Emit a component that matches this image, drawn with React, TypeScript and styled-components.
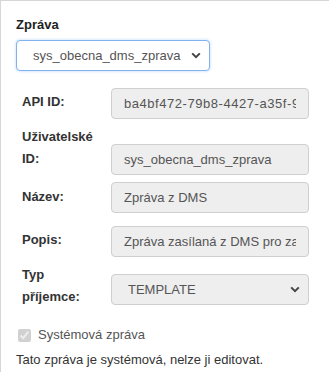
import React from 'react'
import styled, { createGlobalStyle } from 'styled-components'

const GlobalStyle = createGlobalStyle`
  html, body { margin: 0; padding: 0; background: #fff; }
`

const Panel = styled.div`
  box-sizing: border-box;
  width: 329px;
  height: 372px;
  border-top: 1px solid #d6d6d6;
  border-left: 1px solid #d6d6d6;
  padding: 15px 0 0 15px;
  font-family: 'Liberation Sans', Arial, sans-serif;
  font-size: 13px;
  color: #333;
`

const Title = styled.div`
  font-weight: bold;
  line-height: 18px;
  color: #222;
`

const SelectWrap = styled.div<{ $width: number; $disabled?: boolean; $focus?: boolean; $mt?: number }>`
  box-sizing: border-box;
  width: ${(p) => p.$width}px;
  height: 31px;
  margin-top: ${(p) => p.$mt ?? 0}px;
  border: 1px solid ${(p) => (p.$focus ? '#7fb2ef' : '#cfcfcf')};
  border-radius: 4px;
  background: ${(p) => (p.$disabled ? '#eee' : '#fff')};
  box-shadow: ${(p) => (p.$focus ? '0 0 3px rgba(102, 160, 233, 0.45)' : 'none')};
  display: flex;
  align-items: center;
  color: #555;
`

const SelectText = styled.span<{ $pl: number }>`
  padding-left: ${(p) => p.$pl}px;
  flex: 1;
  white-space: nowrap;
`

const Chevron = styled.svg`
  width: 10px;
  height: 7px;
  margin-right: 8px;
`

const Form = styled.div`
  padding-left: 6px;
`

const Row = styled.div<{ $mt: number }>`
  display: flex;
  align-items: flex-start;
  margin-top: ${(p) => p.$mt}px;
`

const FieldLabel = styled.div<{ $offset?: number }>`
  width: 89px;
  flex: none;
  line-height: 22px;
  padding-top: ${(p) => p.$offset ?? 0}px;
  font-weight: bold;
  color: #333;
`

const Field = styled.div<{ $offset?: number }>`
  box-sizing: border-box;
  width: 198px;
  height: 31px;
  margin-top: ${(p) => p.$offset ?? 0}px;
  padding: 0 12px;
  border: 1px solid #cfcfcf;
  border-radius: 4px;
  background: #eee;
  color: #555;
  line-height: 29px;
`

const FieldValue = styled.span<{ $spacing?: number }>`
  display: block;
  overflow: hidden;
  white-space: nowrap;
  letter-spacing: ${(p) => p.$spacing ?? 0}px;
`

const CheckRow = styled.label`
  display: flex;
  align-items: center;
  margin-top: 18px;
  line-height: 18px;
  color: #555;
`

const Check = styled.input`
  width: 13px;
  height: 13px;
  margin: 0 7px 0 2px;
`

const Note = styled.div`
  margin-top: 7px;
  line-height: 18px;
  color: #333;
`

const ChevronIcon = () => (
  <Chevron viewBox="0 0 10 7">
    <path d="M1.2 1.4 L5 5.2 L8.8 1.4" fill="none" stroke="#444" strokeWidth="2" />
  </Chevron>
)

const ReadOnlyField = ({ value, offset, spacing }: { value: string; offset?: number; spacing?: number }) => (
  <Field $offset={offset}>
    <FieldValue $spacing={spacing}>{value}</FieldValue>
  </Field>
)

export default function App() {
  return (
    <Panel>
      <GlobalStyle />
      <Title>Zpráva</Title>
      <SelectWrap $width={194} $focus $mt={6}>
        <SelectText $pl={16}>sys_obecna_dms_zprava</SelectText>
        <ChevronIcon />
      </SelectWrap>
      <Form>
        <Row $mt={17}>
          <FieldLabel $offset={3}>API ID:</FieldLabel>
          <ReadOnlyField spacing={0.55} value="ba4bf472-79b8-4427-a35f-9c1e2d7b0a11" />
        </Row>
        <Row $mt={7}>
          <FieldLabel>
            Uživatelské
            <br />
            ID:
          </FieldLabel>
          <ReadOnlyField offset={18} value="sys_obecna_dms_zprava" />
        </Row>
        <Row $mt={7}>
          <FieldLabel $offset={4}>Název:</FieldLabel>
          <ReadOnlyField value="Zpráva z DMS" />
        </Row>
        <Row $mt={13}>
          <FieldLabel $offset={3}>Popis:</FieldLabel>
          <ReadOnlyField value="Zpráva zasílaná z DMS pro zaměstnance" />
        </Row>
        <Row $mt={7}>
          <FieldLabel>
            Typ
            <br />
            příjemce:
          </FieldLabel>
          <SelectWrap $width={198} $disabled $mt={10}>
            <SelectText $pl={16}>TEMPLATE</SelectText>
            <ChevronIcon />
          </SelectWrap>
        </Row>
      </Form>
      <CheckRow>
        <Check type="checkbox" checked disabled readOnly />
        Systémová zpráva
      </CheckRow>
      <Note>Tato zpráva je systémová, nelze ji editovat.</Note>
    </Panel>
  )
}
